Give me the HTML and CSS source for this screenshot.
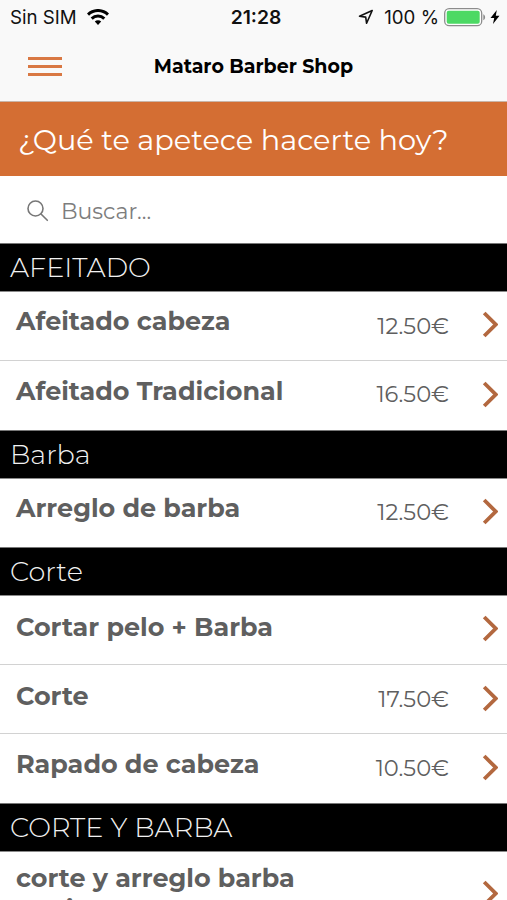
FILE: index.html
```
<!DOCTYPE html>
<html lang="es">
  <head>
    <meta charset="UTF-8" />
    <meta name="viewport" content="width=device-width, initial-scale=1.0" />
    <title>Mataro Barber Shop</title>
    <link rel="stylesheet" href="styles.css">
  </head>
  <body>
    <div class="app">
      <header class="header">
        <div class="status-bar">
          <div class="status-left">
            <span class="carrier">Sin SIM</span>
            <svg class="wifi" width="22" height="16" viewBox="0 0 22 16" fill="none" stroke="#000" stroke-width="3">
              <path d="M1 5.6a14.2 14.2 0 0 1 20 0" />
              <path d="M4.7 9.6a9 9 0 0 1 12.6 0" />
              <path d="M11 16l-3.2-3.4a4.6 4.6 0 0 1 6.4 0z" fill="#000" stroke="none" />
            </svg>
          </div>
          <span class="clock">21:28</span>
          <div class="status-right">
            <svg class="location" width="16" height="16" viewBox="0 0 16 16" fill="none" stroke="#111" stroke-width="1.6" stroke-linejoin="round">
              <path d="M14.2 1.5L1.5 7.2l6.2.9.9 6.2z" />
            </svg>
            <span class="percent">100 %</span>
            <svg class="battery" width="42" height="19" viewBox="0 0 42 19">
              <rect x="0.7" y="0.7" width="37" height="17" rx="4.5" fill="#fff" stroke="#8c8c8c" stroke-width="1.3" />
              <rect x="2.7" y="2.7" width="33" height="13" rx="2" fill="#4cd964" />
              <path d="M39.3 6.3c2.4 1 2.4 5 0 6z" fill="#8c8c8c" />
            </svg>
            <svg class="bolt" width="10" height="14" viewBox="0 0 10 14">
              <path d="M6.8 0L0.5 8h3.7L3 14l6.5-8.2H5.8z" fill="#000" />
            </svg>
          </div>
        </div>
        <nav class="navbar">
          <button class="menu-btn" aria-label="Menu"><span></span><span></span><span></span></button>
          <h1 class="title">Mataro Barber Shop</h1>
        </nav>
      </header>

      <div class="banner"><span>¿Qué te apetece hacerte hoy?</span></div>

      <div class="search">
        <svg width="22" height="22" viewBox="0 0 22 22" fill="none" stroke="#777" stroke-width="1.6" stroke-linecap="round">
          <circle cx="8.5" cy="8.5" r="7.5" />
          <path d="M14 14l6.3 6.3" />
        </svg>
        <span>Buscar...</span>
      </div>

      <h2 class="category">AFEITADO</h2>
      <a class="service">
        <span class="name">Afeitado cabeza</span>
        <span class="price">12.50€</span>
        <svg class="arrow" viewBox="0 0 16 27"><path d="M2.2 2l11.5 11.5L2.2 25" /></svg>
      </a>
      <a class="service">
        <span class="name">Afeitado Tradicional</span>
        <span class="price">16.50€</span>
        <svg class="arrow" viewBox="0 0 16 27"><path d="M2.2 2l11.5 11.5L2.2 25" /></svg>
      </a>

      <h2 class="category">Barba</h2>
      <a class="service">
        <span class="name">Arreglo de barba</span>
        <span class="price">12.50€</span>
        <svg class="arrow" viewBox="0 0 16 27"><path d="M2.2 2l11.5 11.5L2.2 25" /></svg>
      </a>

      <h2 class="category">Corte</h2>
      <a class="service no-price">
        <span class="name">Cortar pelo + Barba</span>
        <svg class="arrow" viewBox="0 0 16 27"><path d="M2.2 2l11.5 11.5L2.2 25" /></svg>
      </a>
      <a class="service">
        <span class="name">Corte</span>
        <span class="price">17.50€</span>
        <svg class="arrow" viewBox="0 0 16 27"><path d="M2.2 2l11.5 11.5L2.2 25" /></svg>
      </a>
      <a class="service">
        <span class="name">Rapado de cabeza</span>
        <span class="price">10.50€</span>
        <svg class="arrow" viewBox="0 0 16 27"><path d="M2.2 2l11.5 11.5L2.2 25" /></svg>
      </a>

      <h2 class="category">CORTE Y BARBA</h2>
      <a class="service tall">
        <span class="name">corte y arreglo barba<br>Senior</span>
        <svg class="arrow" viewBox="0 0 16 27"><path d="M2.2 2l11.5 11.5L2.2 25" /></svg>
      </a>
    </div>
  </body>
</html>
```
FILE: styles.css
```
* {
  margin: 0;
  padding: 0;
  box-sizing: border-box;
}

body {
  font-family: Montserrat, Inter, sans-serif;
  background: #fff;
  overflow: hidden;
}

.app {
  width: 100%;
  height: 100vh;
  overflow: hidden;
  display: flex;
  flex-direction: column;
}

.app > * {
  flex-shrink: 0;
}

/* Header */
.header {
  height: 102px;
  background: #f9f9f9;
  border-bottom: 1px solid #c9b5a8;
}

.status-bar {
  display: grid;
  grid-template-columns: 1fr auto 1fr;
  align-items: center;
  height: 34px;
  padding: 0 7px 0 10px;
  font-family: Inter, sans-serif;
  font-size: 18.7px;
  color: #111;
}

.status-left,
.status-right {
  display: flex;
  align-items: center;
}

.status-right {
  justify-content: flex-end;
}

.wifi {
  margin-left: 10px;
}

.clock {
  padding-left: 2px;
  font-size: 19.3px;
  font-weight: 600;
}

.percent {
  margin: 0 5px 0 10px;
}

.bolt {
  margin-left: 4px;
}

.navbar {
  display: grid;
  grid-template-columns: 1fr auto 1fr;
  align-items: center;
  height: 65px;
  padding: 0 28px;
}

.menu-btn {
  display: flex;
  flex-direction: column;
  gap: 5px;
  width: 34px;
  border: none;
  background: none;
}

.menu-btn span {
  width: 34px;
  height: 3px;
  background: #d97843;
}

.title {
  font-size: 19px;
  font-weight: 700;
  color: #000;
}

.banner {
  height: 74px;
  padding-left: 18px;
  background: #d46e33;
  color: #fff;
  font-size: 28.8px;
  line-height: 75px;
  white-space: nowrap;
}

.search {
  display: flex;
  align-items: center;
  gap: 12px;
  height: 67px;
  padding: 3px 27px 0;
  color: #7d7d7d;
  font-size: 22px;
}

/* List */
.category {
  height: 49px;
  padding-left: 10px;
  background: #000;
  border-top: 1px solid #777;
  border-bottom: 1px solid #8a8a8a;
  color: #f2f2f2;
  font-size: 27.1px;
  font-weight: 300;
  line-height: 48px;
}

.service {
  display: flex;
  height: 68.8px;
  padding: 0 9px 0 16px;
  border-bottom: 1px solid #d2d2d2;
  color: #5f5f5f;
}

.service:has(+ .category) {
  border-bottom: none;
}

.name {
  flex: 1;
  padding-top: 13.2px;
  font-size: 25.45px;
  font-weight: 700;
  line-height: 32px;
  white-space: nowrap;
}

.service + .service .name {
  padding-top: 14.4px;
}

.no-price .name {
  padding-top: 15px;
}

.price {
  padding-top: 18.6px;
  margin-right: 33px;
  font-size: 22.6px;
  line-height: 30px;
}

.arrow {
  width: 16px;
  height: 27px;
  margin-top: 19px;
  fill: none;
  stroke: #b3683f;
  stroke-width: 3.8;
}

.service + .service .arrow {
  margin-top: 20px;
}

.tall {
  height: 90px;
}

.tall .name {
  padding-top: 10.5px;
  line-height: 31px;
}

.tall .arrow {
  margin-top: 28px;
}
```
